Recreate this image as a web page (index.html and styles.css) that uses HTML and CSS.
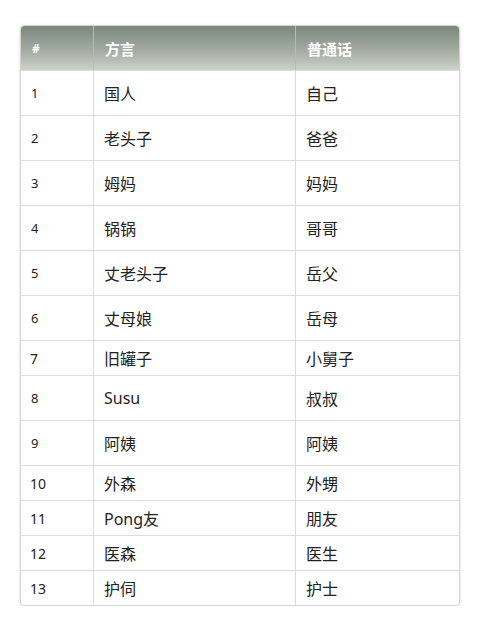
FILE: index.html
```html
<!DOCTYPE html>
<html>
<head>
<meta charset="utf-8">
<link rel="stylesheet" href="styles.css">
</head>
<body>
<div class="wrap">
<table class="tbl">
  <thead>
    <tr><th class="c1">#</th><th class="c2">方言</th><th class="c3">普通话</th></tr>
  </thead>
  <tbody>
    <tr class="tall"><td class="num">1</td><td>国人</td><td>自己</td></tr>
    <tr class="tall"><td class="num">2</td><td>老头子</td><td>爸爸</td></tr>
    <tr class="tall"><td class="num">3</td><td>姆妈</td><td>妈妈</td></tr>
    <tr class="tall"><td class="num">4</td><td>锅锅</td><td>哥哥</td></tr>
    <tr class="tall"><td class="num">5</td><td>丈老头子</td><td>岳父</td></tr>
    <tr class="tall"><td class="num">6</td><td>丈母娘</td><td>岳母</td></tr>
    <tr class="short"><td class="num big">7</td><td>旧罐子</td><td>小舅子</td></tr>
    <tr class="tall"><td class="num">8</td><td>Susu</td><td>叔叔</td></tr>
    <tr class="tall"><td class="num">9</td><td>阿姨</td><td>阿姨</td></tr>
    <tr class="short"><td class="num big">10</td><td>外森</td><td>外甥</td></tr>
    <tr class="short"><td class="num big">11</td><td>Pong友</td><td>朋友</td></tr>
    <tr class="short"><td class="num big">12</td><td>医森</td><td>医生</td></tr>
    <tr class="short"><td class="num big">13</td><td>护伺</td><td>护士</td></tr>
  </tbody>
</table>
</div>
</body>
</html>
```

FILE: styles.css
```css
html, body {
  margin: 0;
  padding: 0;
  background: #ffffff;
}
body {
  font-family: "Noto Sans", "Noto Sans CJK SC", sans-serif;
  color: #333333;
}
.wrap {
  padding: 25px 20px 0 20px;
}
.tbl {
  width: 440px;
  border-collapse: separate;
  border-spacing: 0;
  border: 1px solid #d4d4d4;
  border-radius: 4px;
  box-shadow: 0 1px 3px rgba(0,0,0,0.15);
  table-layout: fixed;
  overflow: hidden;
}
.tbl th {
  height: 44px;
  padding: 0 0 0 11px;
  text-align: left;
  font-size: 15px;
  font-weight: bold;
  color: #ffffff;
  background: linear-gradient(to bottom, #7b887e 0%, #a7afa6 60%, #cdd1cb 100%);
  border-left: 1px solid #b5bcb4;
  vertical-align: middle;
}
.tbl th.c1 { border-left: none; width: 61px; font-size: 12px; padding-left: 11px; }
.tbl th.c2 { width: 190px; }
.tbl th:first-child { border-top-left-radius: 3px; }
.tbl th:last-child { border-top-right-radius: 3px; }
.tbl td {
  padding: 0 0 0 10px;
  font-size: 16px;
  border-top: 1px solid #dcdcdc;
  border-left: 1px solid #dcdcdc;
  vertical-align: middle;
  color: #222222;
}
.tbl td:first-child { border-left: none; }
.tbl td.num { font-size: 13px; padding-left: 10px; }
.tbl td.num.big { font-size: 14px; padding-left: 9px; }
.tbl tr.tall td { height: 44px; }
.tbl tr.short td { height: 34px; }
```
